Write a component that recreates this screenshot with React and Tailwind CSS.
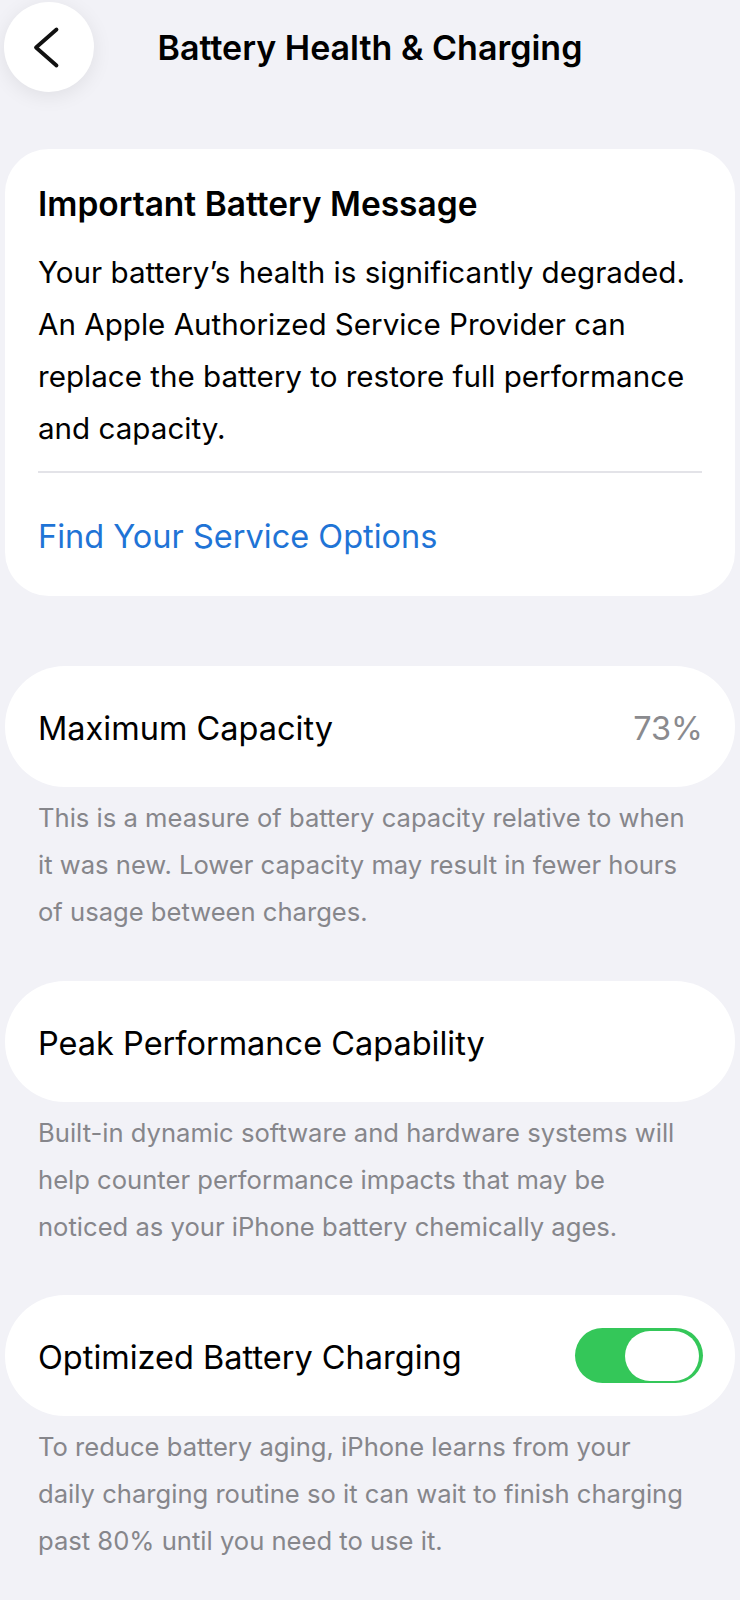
import React from 'react'

const font = { fontFamily: 'Inter, "Noto Sans", sans-serif' }

function Toggle() {
  return (
    <div className="flex h-[55px] w-[128px] items-center justify-end rounded-full bg-[#34c759] pr-[4px]">
      <div className="h-[50px] w-[74px] rounded-full bg-white" />
    </div>
  )
}

function Row({ label, right }) {
  return (
    <div className="mx-[5px] flex h-[121px] items-center justify-between rounded-[60px] bg-white pl-[33px] pr-[32px]">
      <span className="pt-[4px] text-[32.5px] leading-[40px] text-black">{label}</span>
      {right}
    </div>
  )
}

function Footer({ children }) {
  return (
    <p className="mt-[7px] whitespace-nowrap px-[38px] text-[25.6px] leading-[47px] text-[#86868b]">{children}</p>
  )
}

export default function App() {
  return (
    <div className="min-h-[1600px] w-[740px] bg-[#f2f2f7] pb-10" style={font}>
      {/* Nav bar */}
      <header className="relative flex h-[96px] items-start justify-center">
        <button className="absolute left-[4px] top-[2px] flex h-[90px] w-[90px] items-center justify-center rounded-full bg-white shadow-[0_4px_20px_rgba(0,0,0,0.08)]">
          <svg width="90" height="90" viewBox="0 0 90 90" fill="none">
            <path d="M52.5 27.5 L32 45.5 L52.5 63.5" stroke="#111" strokeWidth="3.8" strokeLinecap="round" strokeLinejoin="round" />
          </svg>
        </button>
        <h1 className="mt-[26px] text-[34px] font-semibold leading-[44px] text-black">
          Battery Health &amp; Charging
        </h1>
      </header>

      {/* Message card */}
      <section className="mx-[5px] mt-[53px] rounded-[44px] bg-white px-[33px] pb-[39px] pt-[35px]">
        <h2 className="text-[33.5px] font-semibold leading-[40px] text-black">Important Battery Message</h2>
        <p className="mt-[22px] whitespace-nowrap text-[29.6px] leading-[52px] text-black">
          Your battery’s health is significantly degraded.<br />
          An Apple Authorized Service Provider can<br />
          replace the battery to restore full performance<br />
          and capacity.
        </p>
        <hr className="mt-[17px] border-t-[2px] border-[#e3e3e8]" />
        <a href="#" className="mt-[44px] block text-[32.5px] leading-[40px] text-[#1f74d6]">
          Find Your Service Options
        </a>
      </section>

      <div className="mt-[70px]">
        <Row label="Maximum Capacity" right={<span className="pt-[4px] text-[32.5px] leading-[40px] text-[#8a8a8e]">73%</span>} />
        <Footer>
          This is a measure of battery capacity relative to when<br />
          it was new. Lower capacity may result in fewer hours<br />
          of usage between charges.
        </Footer>
      </div>

      <div className="mt-[46px]">
        <Row label="Peak Performance Capability" />
        <Footer>
          Built-in dynamic software and hardware systems will<br />
          help counter performance impacts that may be<br />
          noticed as your iPhone battery chemically ages.
        </Footer>
      </div>

      <div className="mt-[45px]">
        <Row label="Optimized Battery Charging" right={<Toggle />} />
        <Footer>
          To reduce battery aging, iPhone learns from your<br />
          daily charging routine so it can wait to finish charging<br />
          past 80% until you need to use it.
        </Footer>
      </div>
    </div>
  )
}
